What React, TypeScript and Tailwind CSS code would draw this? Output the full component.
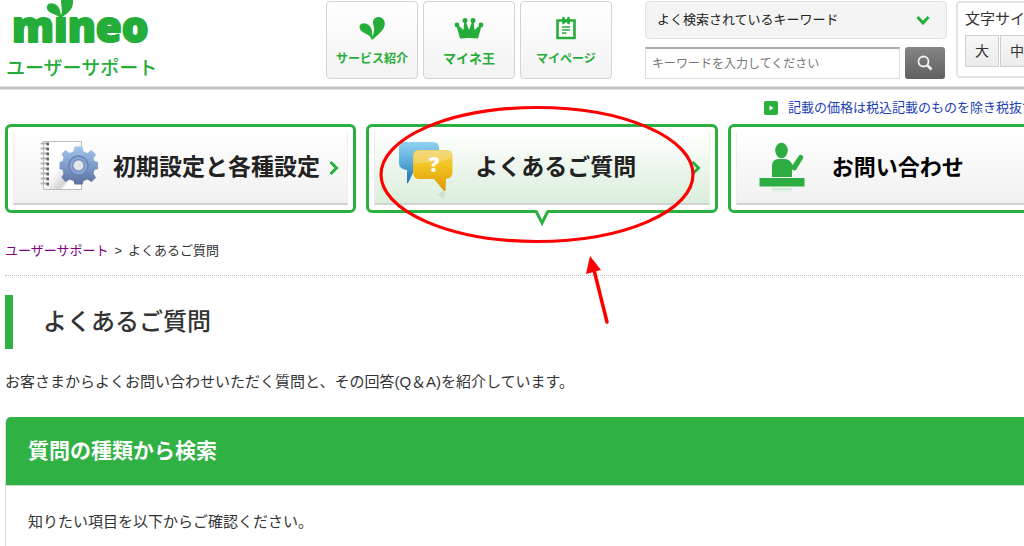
import { useState } from "react";
import type { ReactNode } from "react";

type CategoryCardProps = {
  label: string;
  icon: ReactNode;
  tone?: "default" | "active" | "contact";
};

const popularKeywords = ["よく検索されているキーワード"];

const textSizes = ["大", "中", "小"];

function LeafIcon() {
  return (
    <svg viewBox="0 0 28 24" className="h-6 w-7" fill="#25ad39" aria-hidden="true">
      <path d="M13.5 23.5C12 18.5 8 18.5 4 15.5C1.500 13.600 1 11 1.800 9.500C3 7 6 6.800 9 8C13 9.800 14.500 14 14.300 21C15.500 18 17 13.500 15.500 9.500C14 5 16 1 20.500 1C25 1 27.300 5 26.700 9C25.500 16 18 19.500 15.200 23.300Z" />
    </svg>
  );
}

function CrownIcon() {
  return (
    <svg viewBox="0 0 30 22" className="h-[22px] w-[30px]" fill="#25ad39" aria-hidden="true">
      <circle cx="3" cy="8" r="2.400" />
      <circle cx="11" cy="3.500" r="2.500" />
      <circle cx="19" cy="3.500" r="2.500" />
      <circle cx="27" cy="8" r="2.400" />
      <path d="M2.500 9L4.500 8.500L9.500 13L10.300 4H11.700L15 13L18.300 4H19.700L20.500 13L25.500 8.500L27.500 9L24 21.500Q15 20.500 6 21.500Z" />
    </svg>
  );
}

function NotepadIcon() {
  return (
    <svg viewBox="0 0 20 24" className="h-6 w-5" aria-hidden="true">
      <path d="M1.500 4.500H18.500V22H1.500Z" fill="#fff" stroke="#25ad39" strokeWidth="2.600" />
      <path d="M6 3H14V6.500H6Z" fill="#25ad39" />
      <path d="M7.500 2V7M12.500 2V7" stroke="#25ad39" strokeWidth="2.600" strokeLinecap="round" />
      <path d="M6 11H14M6 14H14M6 17H10.500" stroke="#25ad39" strokeWidth="1.300" />
    </svg>
  );
}

function SettingsIcon() {
  return (
    <svg viewBox="-4 0 60 60" className="h-[60px] w-[60px] overflow-visible" aria-hidden="true">
      <defs>
        <linearGradient id="gear" x1="0" y1="0" x2="0" y2="1">
          <stop offset="0" stopColor="#a3c6ea" />
          <stop offset="0.500" stopColor="#7f9dcb" />
          <stop offset="1" stopColor="#5c6f9c" />
        </linearGradient>
        <linearGradient id="sheet" x1="0" y1="0" x2="1" y2="1">
          <stop offset="0.450" stopColor="#ffffff" />
          <stop offset="0.700" stopColor="#d4d4d4" />
          <stop offset="0.760" stopColor="#ffffff" />
        </linearGradient>
      </defs>
      <path d="M5 53H43V59H5Z" fill="#f1f1f1" />
      <path d="M3.500 3.500H41.500V51.500H3.500Z" fill="url(#sheet)" stroke="#bdbdbd" />
      <path
        d="M1.500 5.500H7M1.500 10.500H7M1.500 15.500H7M1.500 20.500H7M1.500 25.500H7M1.500 30.500H7M1.500 35.500H7M1.500 40.500H7M1.500 45.500H7"
        stroke="#b5b5b5"
        strokeWidth="2"
        strokeLinecap="round"
      />
      <path
        d="M6.500 6H9M6.500 11H9M6.500 16H9M6.500 21H9M6.500 26H9M6.500 31H9M6.500 36H9M6.500 41H9M6.500 46H9"
        stroke="#666"
        strokeWidth="3"
      />
      <g fill="url(#gear)">
        <path d="M34.500 8.500H42.500L43.500 13.500L47.500 15L51.500 12L56 16.500L53.500 20.500L54.500 23L58 24V31L54.500 32L53.500 35.500L56 39.500L51.500 44L47.500 41.500L43.500 43L42.500 46.500H34.500L33.500 43L29.500 41.500L25.500 44L21.500 39.500L23.500 35.500L22.500 32L19.500 31V24L22.500 23L23.500 19.500L21.500 16L25.500 12L29.500 15L33.500 13.500Z" />
      </g>
      <circle cx="38.500" cy="27.500" r="9.500" fill="#89a5d2" stroke="#6883b5" strokeWidth="1.500" />
      <circle cx="38.500" cy="27.500" r="6.500" fill="#7691c1" />
      <circle cx="38.500" cy="27.500" r="5" fill="#e3e7ec" />
    </svg>
  );
}

function QuestionIcon() {
  return (
    <svg viewBox="0 -1 58 62" className="h-[62px] w-[58px]" aria-hidden="true">
      <defs>
        <linearGradient id="blueBubble" x1="0" y1="0" x2="0" y2="1">
          <stop offset="0" stopColor="#93d1ef" />
          <stop offset="0.450" stopColor="#5fb0dd" />
          <stop offset="1" stopColor="#1d72b4" />
        </linearGradient>
        <linearGradient id="yellowBubble" x1="0" y1="0" x2="0" y2="1">
          <stop offset="0" stopColor="#f0d163" />
          <stop offset="0.400" stopColor="#f3c320" />
          <stop offset="1" stopColor="#dd9907" />
        </linearGradient>
      </defs>
      <path d="M44 54L48 53L47 61L41 57Z" fill="#cfe0cf" />
      <path
        d="M7 4H36Q42 4 42 10V25Q42 31 36 31H18L11 45H10V32Q2 31 2 25V9Q2 4 7 4Z"
        fill="url(#blueBubble)"
      />
      <path
        d="M22 12H49Q55.500 12 55.500 18V34Q55.500 40 49 41L48.500 53H47L37 41H22Q16 41 16 34V18Q16 12 22 12Z"
        fill="url(#yellowBubble)"
      />
      <path d="M22 13H49Q54.500 13 54.500 18V20Q42 26 17 25V18Q17 13 22 13Z" fill="#fff" opacity="0.200" />
      <text
        x="37"
        y="34"
        textAnchor="middle"
        className="fill-white font-['Open_Sans',sans-serif] text-[21px] font-extrabold"
      >
        ?
      </text>
    </svg>
  );
}

function ReceptionIcon() {
  return (
    <svg viewBox="1 -1 48 54" className="h-[54px] w-12" aria-hidden="true">
      <ellipse cx="23.500" cy="8.500" rx="6.300" ry="7.800" fill="#2dad42" />
      <path d="M14 35V24Q14 17 21 17H27Q32 17 34.500 23L41 13.500Q42.500 12 44.500 13.500Q45.800 15 45 16.500L38 28Q37 29 34 27.500V35Z" fill="#2dad42" />
      <path d="M1.500 36H46.500V44.500H1.500Z" fill="#2dad42" />
      <path d="M14 46H34V48H14Z" fill="#cfe9d3" />
      <path d="M14 48H34V50H14Z" fill="#e6f3e8" />
    </svg>
  );
}

function CategoryCard({ label, icon, tone = "default" }: CategoryCardProps) {
  const isActive = tone === "active";

  return (
    <a
      href="#"
      aria-current={isActive ? "page" : undefined}
      className="relative block h-[89px] rounded-md border-[3px] border-[#2ab03f] bg-white p-[5px]"
    >
      <span
        className={`flex h-full items-center border-x border-b-2 border-x-[#eeeeee] border-b-[#d2d2d2] bg-linear-to-b from-white ${
          isActive ? "to-[#daeedb]" : "to-[#f1f1f1]"
        }`}
      >
        <span className="ml-[22px] flex w-[60px] shrink-0 justify-start">{icon}</span>
        <span
          className={`flex-1 whitespace-nowrap font-bold ${
            tone === "contact"
              ? "pl-[13px] text-[22px] text-black"
              : isActive
                ? "pl-[18px] text-[23px] text-[#222]"
                : "pl-[17px] text-[23px] text-[#222]"
          }`}
        >
          {label}
        </span>
        <svg viewBox="0 0 10 16" className="mr-2 h-4 w-2.5 shrink-0" aria-hidden="true">
          <path d="M1.500 2L7.500 8L1.500 14" fill="none" stroke="#25b03c" strokeWidth="3" />
        </svg>
      </span>
      {isActive ? (
        <svg
          viewBox="0 0 16 18"
          className="absolute top-full left-1/2 h-[18px] w-4 -translate-x-1/2"
          aria-hidden="true"
        >
          <path d="M2.500 0H13.500L8 11Z" fill="#fff" />
          <path d="M2 1L8 13L14 1" fill="none" stroke="#2ab03f" strokeWidth="3" />
        </svg>
      ) : null}
    </a>
  );
}

function ServiceLink({ label, icon, large = false }: { label: string; icon: ReactNode; large?: boolean }) {
  return (
    <a
      href="#"
      className="flex h-[78px] w-[92px] flex-col items-center rounded border border-[#d4d4d4] bg-linear-to-b from-white to-[#f3f3f3] pt-[13px]"
    >
      <span className="flex h-[26px] items-center">{icon}</span>
      <span
        className={`mt-2 leading-5 font-bold whitespace-nowrap text-[#25ad39] ${
          large ? "text-[13px]" : "text-xs"
        }`}
      >
        {label}
      </span>
    </a>
  );
}

function Header() {
  const [query, setQuery] = useState("");

  return (
    <header>
      <div className="flex h-[86px] pt-px">
        <div className="w-[326px] shrink-0">
          <a href="#" className="block">
            <svg viewBox="0 0 160 52" className="h-[52px] w-40 overflow-visible" role="img" aria-label="mineo">
              <path
                d="M60.500 17.500C57 13 50 13 47.500 9C45.500 5 48 2 52 2.300C57 3 60 7 60.500 12L61 14.500C63 10 61 5 61 0V-2H73V2C72.500 10 66 13 60.500 17.500Z"
                fill="#25ad39"
              />
              <text
                x="12"
                y="41"
                fill="#25ad39"
                stroke="#25ad39"
                strokeWidth="2"
                strokeLinejoin="round"
                className="font-['Open_Sans',sans-serif] text-[42px] font-extrabold"
              >
                mıneo
              </text>
            </svg>
          </a>
          <p className="ml-1.5 text-[19px] leading-8 font-medium text-[#25ad39]">ユーザーサポート</p>
        </div>

        <nav className="flex shrink-0 gap-[5px]" aria-label="サービス">
          <ServiceLink label="サービス紹介" icon={<LeafIcon />} />
          <ServiceLink label="マイネ王" icon={<CrownIcon />} large />
          <ServiceLink label="マイページ" icon={<NotepadIcon />} />
        </nav>

        <form className="ml-[33px] w-[302px] shrink-0" onSubmit={(event) => event.preventDefault()}>
          <div className="relative">
            <select
              aria-label="よく検索されているキーワード"
              className="h-[38px] w-full appearance-none rounded border border-[#e2e2e2] bg-[#f4f4f4] px-[11px] text-[13px] text-[#222]"
            >
              {popularKeywords.map((keyword) => (
                <option key={keyword}>{keyword}</option>
              ))}
            </select>
            <svg
              viewBox="0 0 14 10"
              className="pointer-events-none absolute top-3.5 right-[17px] h-2.5 w-3.5"
              aria-hidden="true"
            >
              <path d="M1.500 2L7 8L12.500 2" fill="none" stroke="#25b03c" strokeWidth="3" />
            </svg>
          </div>
          <div className="mt-2 flex gap-[5px]">
            <input
              type="text"
              aria-label="キーワード"
              placeholder="キーワードを入力してください"
              value={query}
              onChange={(event) => setQuery(event.target.value)}
              className="h-8 w-[255px] border border-t-2 border-[#dddddd] border-t-[#aaaaaa] bg-white px-1.5 text-xs text-[#333] placeholder:text-[#777]"
            />
            <button
              type="submit"
              aria-label="検索"
              className="flex h-8 w-10 items-center justify-center rounded-[3px] bg-linear-to-b from-[#858585] to-[#606060]"
            >
              <svg viewBox="0 0 16 16" className="h-4 w-4" fill="none" stroke="#f2f2f2" aria-hidden="true">
                <circle cx="6.500" cy="6.500" r="5" strokeWidth="1.800" />
                <path d="M10.500 10.500L14.500 14.500" strokeWidth="2.600" />
              </svg>
            </button>
          </div>
        </form>

        <div className="ml-[9px] h-[77px] w-[123px] shrink-0 rounded border-2 border-[#e4e4e4] bg-white pl-[7px]">
          <p className="pt-1.5 text-[15px] leading-5 text-[#333]">文字サイズ</p>
          <div className="mt-[6px] flex gap-px">
            {textSizes.map((size) => (
              <button
                key={size}
                type="button"
                className="h-8 w-[34px] border border-[#cfcfcf] bg-linear-to-b from-[#f7f7f7] to-[#ececec] text-sm text-[#333]"
              >
                {size}
              </button>
            ))}
          </div>
        </div>
      </div>
      <div className="h-1 border-y border-[#dedede] bg-[#c6c6c6]" />
    </header>
  );
}

// Hand-drawn style marker over the FAQ card
function Highlight() {
  return (
    <svg
      viewBox="0 0 330 230"
      className="pointer-events-none absolute top-[100px] left-[373px] h-[230px] w-[330px]"
      fill="none"
      stroke="#ff0000"
      aria-hidden="true"
    >
      <ellipse cx="164" cy="74.500" rx="156" ry="67" strokeWidth="3.200" />
      <path d="M234 222L221 170" strokeWidth="3.500" strokeLinecap="round" />
      <path d="M217 156L213 174L228 170Z" fill="#ff0000" stroke="none" />
    </svg>
  );
}

export default function App() {
  return (
    <div className="relative min-h-screen overflow-hidden bg-white font-['Liberation_Sans','Noto_Sans_CJK_JP',sans-serif] text-[#333]">
      <div className="min-w-[1084px]">
        <Header />

        <main className="px-[5px]">
          <p className="flex h-9 items-center justify-end gap-2.5 pr-[5px]">
            <svg viewBox="0 0 14 14" className="h-3.5 w-3.5" aria-hidden="true">
              <rect width="14" height="14" rx="2" fill="#2ab03f" />
              <path d="M5.500 4.500L9.500 7L5.500 9.500Z" fill="#fff" />
            </svg>
            <a href="#" className="text-[13px] text-[#1c41b4]">
              記載の価格は税込記載のものを除き税抜での表示
            </a>
          </p>

          <nav className="-mt-0.5 grid grid-cols-3 gap-2.5" aria-label="カテゴリ">
            <CategoryCard label="初期設定と各種設定" icon={<SettingsIcon />} />
            <CategoryCard label="よくあるご質問" icon={<QuestionIcon />} tone="active" />
            <CategoryCard label="お問い合わせ" icon={<ReceptionIcon />} tone="contact" />
          </nav>

          <nav
            className="mt-[26px] flex h-[37px] gap-1.5 border-b border-dotted border-[#b8b8b8] text-[13px] leading-6"
            aria-label="パンくずリスト"
          >
            <a href="#" className="text-[#800080]">
              ユーザーサポート
            </a>
            <span>&gt;</span>
            <span>よくあるご質問</span>
          </nav>

          <h1 className="mt-[19px] border-l-8 border-[#2fb144] pl-[30px] text-2xl leading-[54px] font-medium">
            よくあるご質問
          </h1>

          <p className="mt-5 text-[15px] leading-[26px]">
            お客さまからよくお問い合わせいただく質問と、その回答(Q＆A)を紹介しています。
          </p>

          <section className="mt-[22px] rounded-t-md border-x border-[#dddddd]">
            <h2 className="rounded-t-[5px] border-b border-[#c9dfcc] bg-[#2fb144] px-[22px] text-[21px] leading-[68px] font-bold text-white">
              質問の種類から検索
            </h2>
            <p className="px-[22px] pt-6 pb-8 text-[15px] leading-6">知りたい項目を以下からご確認ください。</p>
          </section>
        </main>
      </div>
      <Highlight />
    </div>
  );
}
